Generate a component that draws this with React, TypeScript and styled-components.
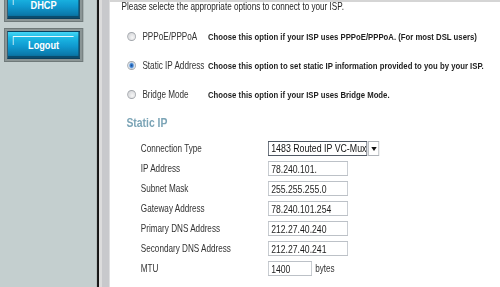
import styled, { createGlobalStyle } from 'styled-components';

// The reference is a horizontally squeezed capture, so the page is laid out
// at its natural width and narrowed once at the root.
const SQUEEZE = 0.8;

const GlobalStyle = createGlobalStyle`
  html, body {
    margin: 0;
    padding: 0;
    background: #fff;
    overflow: hidden;
  }
  body {
    font-family: "Liberation Sans", Arial, sans-serif;
  }
`;

const Page = styled.div`
  display: flex;
  width: ${500 / SQUEEZE}px;
  height: 287px;
  overflow: hidden;
  transform: scaleX(${SQUEEZE});
  transform-origin: 0 0;
`;

const Sidebar = styled.nav`
  width: 121px;
  flex-shrink: 0;
  background: #c4cfcf;
  overflow: hidden;
`;

const NavList = styled.div`
  display: flex;
  flex-direction: column;
  gap: 6px;
  margin-top: -12px;
  padding-left: 5px;
`;

const NavFrame = styled.div`
  width: 99px;
  height: 34px;
  box-sizing: border-box;
  padding: 2px 3px;
  background: #8b9595;
  border: 1px solid #6f7979;
  display: flex;
`;

const NavButton = styled.button`
  position: relative;
  flex: 1;
  border: 1px solid #0a3f5d;
  background: linear-gradient(
    to bottom,
    #45d6f5 0%,
    #1bb8e4 22%,
    #1099cf 55%,
    #0b7cae 85%,
    #08628c 100%
  );
  box-shadow: inset -1px -2px 0 #0a4c6e;
  color: #fff;
  font-family: "Liberation Sans", Arial, sans-serif;
  font-weight: bold;
  font-size: 11.5px;
  padding: 0;
  cursor: pointer;
  display: flex;
  align-items: center;
  justify-content: center;

  &::before {
    content: '';
    position: absolute;
    left: 6px;
    top: 4px;
    width: 75px;
    height: 8px;
    border-top: 1px solid rgba(255, 255, 255, 0.9);
    border-left: 1px solid rgba(255, 255, 255, 0.9);
  }
`;

const Divider = styled.div`
  width: 16px;
  flex-shrink: 0;
  background: linear-gradient(
    to right,
    #4a4f4f 0,
    #151515 1px,
    #151515 3px,
    #dcdcdc 3px,
    #dcdcdc 7px,
    #c8c9cc 7px
  );
`;

const Main = styled.main`
  flex: 1;
  border-top: 2px solid #d5d5d5;
  padding-left: 15px;
  display: flex;
  flex-direction: column;
  font-size: 10px;
  color: #1e1e1e;
`;

const Intro = styled.p`
  margin: 0;
  line-height: 10px;
  font-size: 10.2px;
  white-space: nowrap;
`;

const OptionList = styled.div`
  margin-top: 10px;
  display: flex;
  flex-direction: column;
`;

const OptionRow = styled.label`
  height: 29px;
  display: flex;
  align-items: center;
  padding-left: 7px;
  white-space: nowrap;
`;

const RadioMark = styled.span<{ $checked?: boolean }>`
  width: 11px;
  height: 9px;
  box-sizing: border-box;
  border-radius: 50%;
  border: 1px solid #a3a7ac;
  background: ${({ $checked }) =>
    $checked
      ? 'radial-gradient(circle, #1a4a92 0, #3b84d6 32%, #d4dde8 58%, #eef1f4 100%)'
      : 'radial-gradient(circle at 60% 65%, #f6f6f6 0, #dfe0e2 55%, #c9cbce 100%)'};
  margin-right: 8px;
  flex-shrink: 0;
`;

const OptionLabel = styled.span`
  width: 82px;
  color: #333;
  font-size: 10.2px;
`;

const OptionDesc = styled.span`
  font-weight: bold;
  font-size: 9.7px;
  color: #1e1e1e;
`;

const SectionTitle = styled.h2`
  margin: 6px 0 0;
  padding-left: 6px;
  line-height: 16px;
  font-size: 13px;
  font-weight: bold;
  color: #7ba4b6;
`;

const Form = styled.div`
  margin-top: 10px;
  padding-left: 24px;
  display: flex;
  flex-direction: column;
  gap: 5px;
`;

const FormRow = styled.div`
  height: 15px;
  display: flex;
  align-items: center;
`;

const FieldLabel = styled.span`
  width: 159px;
  flex-shrink: 0;
  color: #333;
  font-size: 10.2px;
  white-space: nowrap;
`;

const TextInput = styled.input<{ $width?: number }>`
  width: ${({ $width }) => $width ?? 100}px;
  height: 15px;
  box-sizing: border-box;
  margin: 0;
  padding: 0 3px;
  border: 1px solid #bcc1c7;
  font-family: "Liberation Sans", Arial, sans-serif;
  font-size: 10.8px;
  color: #1e1e1e;
  background: #fff;
  outline: none;
`;

const Unit = styled.span`
  margin-left: 4px;
  font-size: 10.2px;
  color: #333;
`;

const SelectField = styled.div`
  display: flex;
  height: 15px;
`;

const SelectValue = styled.div`
  width: 124px;
  box-sizing: border-box;
  padding: 0 3px;
  border: 1px solid #4f5864;
  font-size: 11px;
  line-height: 13px;
  white-space: nowrap;
  overflow: hidden;
  color: #111;
`;

const SelectArrow = styled.div`
  width: 14px;
  box-sizing: border-box;
  margin-left: 1px;
  border: 1px solid #adb2b8;
  background: #fff;
  display: flex;
  align-items: center;
  justify-content: center;
`;

const options = [
  {
    label: 'PPPoE/PPPoA',
    desc: 'Choose this option if your ISP uses PPPoE/PPPoA. (For most DSL users)',
  },
  {
    label: 'Static IP Address',
    desc: 'Choose this option to set static IP information provided to you by your ISP.',
    checked: true,
  },
  {
    label: 'Bridge Mode',
    desc: 'Choose this option if your ISP uses Bridge Mode.',
  },
];

const fields = [
  { label: 'IP Address', value: '78.240.101.' },
  { label: 'Subnet Mask', value: '255.255.255.0' },
  { label: 'Gateway Address', value: '78.240.101.254' },
  { label: 'Primary DNS Address', value: '212.27.40.240' },
  { label: 'Secondary DNS Address', value: '212.27.40.241' },
];

export default function App() {
  return (
    <>
      <GlobalStyle />
      <Page>
        <Sidebar>
          <NavList>
            <NavFrame>
              <NavButton>DHCP</NavButton>
            </NavFrame>
            <NavFrame>
              <NavButton>Logout</NavButton>
            </NavFrame>
          </NavList>
        </Sidebar>
        <Divider />
        <Main>
          <Intro>Please selecte the appropriate options to connect to your ISP.</Intro>
          <OptionList>
            {options.map((opt) => (
              <OptionRow key={opt.label}>
                <RadioMark $checked={opt.checked} />
                <OptionLabel>{opt.label}</OptionLabel>
                <OptionDesc>{opt.desc}</OptionDesc>
              </OptionRow>
            ))}
          </OptionList>
          <SectionTitle>Static IP</SectionTitle>
          <Form>
            <FormRow>
              <FieldLabel>Connection Type</FieldLabel>
              <SelectField>
                <SelectValue>1483 Routed IP VC-Mux</SelectValue>
                <SelectArrow>
                  <svg width="7" height="4" viewBox="0 0 7 4">
                    <path d="M0 0h7L3.5 4z" fill="#111" />
                  </svg>
                </SelectArrow>
              </SelectField>
            </FormRow>
            {fields.map((f) => (
              <FormRow key={f.label}>
                <FieldLabel>{f.label}</FieldLabel>
                <TextInput readOnly defaultValue={f.value} />
              </FormRow>
            ))}
            <FormRow>
              <FieldLabel>MTU</FieldLabel>
              <TextInput $width={55} readOnly defaultValue="1400" />
              <Unit>bytes</Unit>
            </FormRow>
          </Form>
        </Main>
      </Page>
    </>
  );
}
